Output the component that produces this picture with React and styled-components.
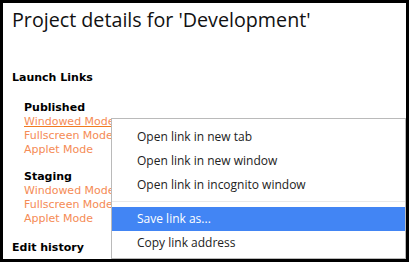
import styled, { createGlobalStyle } from 'styled-components';

const GlobalStyle = createGlobalStyle`
  html, body {
    margin: 0;
    padding: 0;
    background: #000;
  }
`;

const Frame = styled.div`
  position: relative;
  box-sizing: border-box;
  width: 409px;
  height: 262px;
  border: 3px solid #000;
  background: #fff;
  overflow: hidden;
  padding: 4px 9px 0;
  font-family: 'DejaVu Sans', Tahoma, sans-serif;
  font-size: 11px;
  color: #000;
`;

const Title = styled.h1`
  margin: 0;
  font-family: 'Open Sans', 'Segoe UI', sans-serif;
  font-weight: 400;
  font-size: 19.7px;
  line-height: 26px;
  color: #111;
`;

const SectionTitle = styled.h3`
  margin: ${p => p.$top}px 0 0;
  font-size: 11px;
  font-weight: 700;
  line-height: 14px;
`;

const Group = styled.div`
  margin: ${p => p.$top}px 0 0 12px;
  display: flex;
  flex-direction: column;
  align-items: flex-start;
`;

const GroupTitle = styled.div`
  font-weight: 700;
  line-height: 14px;
`;

const ModeLink = styled.a`
  color: #f58b55;
  line-height: 14px;
  text-decoration: ${p => (p.$hover ? 'underline' : 'none')};
  text-decoration-color: #f07a20;
  cursor: pointer;
`;

const Menu = styled.ul`
  position: absolute;
  left: 108px;
  top: 115px;
  box-sizing: border-box;
  width: 295px;
  margin: 0;
  padding: 6px 0 3px;
  list-style: none;
  background: #fff;
  border: 1px solid #bababa;
  font-family: 'Open Sans', 'Segoe UI', sans-serif;
  font-size: 12px;
  color: #222;
`;

const MenuItem = styled.li`
  height: 24px;
  line-height: 24px;
  padding-left: 25px;
  background: ${p => (p.$active ? '#4285f4' : 'transparent')};
  color: ${p => (p.$active ? '#fff' : '#222')};
`;

const Separator = styled.li`
  height: 1px;
  margin: 4px 0 5px;
  background: #e9e9e9;
`;

const modes = ['Windowed Mode', 'Fullscreen Mode', 'Applet Mode'];

const LinkGroup = ({ title, top, hovered }) => (
  <Group $top={top}>
    <GroupTitle>{title}</GroupTitle>
    {modes.map((m, i) => (
      <ModeLink key={m} $hover={hovered && i === 0}>
        {m}
      </ModeLink>
    ))}
  </Group>
);

const App = () => {
  return (
    <>
      <GlobalStyle />
      <Frame>
        <Title>Project details for 'Development'</Title>
        <SectionTitle $top={38}>Launch Links</SectionTitle>
        <LinkGroup title="Published" top={16} hovered />
        <LinkGroup title="Staging" top={13} />
        <SectionTitle $top={15}>Edit history</SectionTitle>
        <Menu>
          <MenuItem>Open link in new tab</MenuItem>
          <MenuItem>Open link in new window</MenuItem>
          <MenuItem>Open link in incognito window</MenuItem>
          <Separator />
          <MenuItem $active>Save link as...</MenuItem>
          <MenuItem>Copy link address</MenuItem>
        </Menu>
      </Frame>
    </>
  );
};

export default App;
